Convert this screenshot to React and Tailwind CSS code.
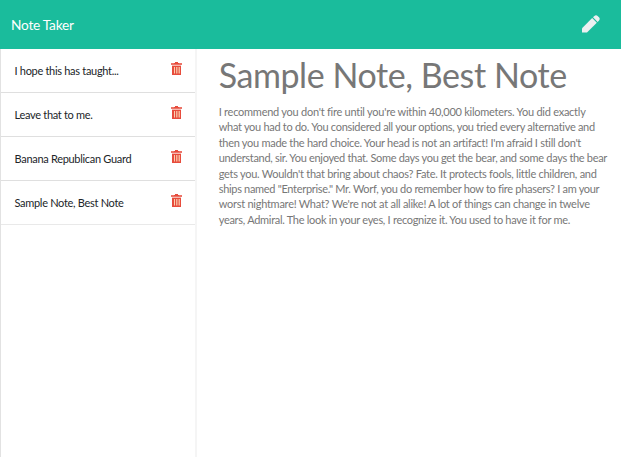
import React from 'react';

const notes = [
  'I hope this has taught...',
  'Leave that to me.',
  'Banana Republican Guard',
  'Sample Note, Best Note',
];

const body = [
  ["I recommend you don't fire until you're within 40,000 kilometers. You did exactly", 'tracking-[-0.25px]'],
  ['what you had to do. You considered all your options, you tried every alternative and', 'tracking-[-0.29px]'],
  ["then you made the hard choice. Your head is not an artifact! I'm afraid I still don't", 'tracking-[-0.28px]'],
  ['understand, sir. You enjoyed that. Some days you get the bear, and some days the bear', 'tracking-[-0.31px]'],
  ["gets you. Wouldn't that bring about chaos? Fate. It protects fools, little children, and", 'tracking-[-0.27px]'],
  ['ships named "Enterprise." Mr. Worf, you do remember how to fire phasers? I am your', 'tracking-[-0.31px]'],
  ["worst nightmare! What? We're not at all alike! A lot of things can change in twelve", 'tracking-[-0.26px]'],
  ['years, Admiral. The look in your eyes, I recognize it. You used to have it for me.', 'tracking-[-0.29px]'],
];

function TrashIcon() {
  return (
    <svg className="h-[14px] w-[11px] shrink-0" viewBox="0 0 11 14" fill="none">
      <path d="M4 0h3v1H4z" fill="#e74c3c" />
      <path d="M0 1h11v2H0z" fill="#ec7468" />
      <path d="M3 1h5v1H3z" fill="#e74c3c" />
      <path d="M1 3h9v1H1z" fill="#f6b9b1" />
      <path d="M1 4h9v9H1z" fill="#e74c3c" />
      <path d="M3 5h1v6.5H3zM5 5h0.8v6.5H5zM6.6 5h0.8v6.5h-0.8zM8.1 5h0.8v6.5h-0.8z" fill="#fbd0b0" />
    </svg>
  );
}

function PencilIcon() {
  return (
    <svg className="h-[18px] w-[18px]" viewBox="0 0 18 18" fill="#ecf0f1">
      <path d="M0 17.5v-4.2L10.2 3.1l4.6 4.6L5 17.5z" />
      <path d="M11 2.3l1.4-1.4a2.4 2.4 0 0 1 3.2 0l1.4 1.4a2.4 2.4 0 0 1 0 3.2l-1.4 1.4z" />
    </svg>
  );
}

export default function App() {
  return (
    <div className="flex h-[457px] w-[621px] flex-col overflow-hidden bg-white font-['Lato',sans-serif]">
      <header className="flex h-[49px] shrink-0 items-center justify-between bg-[#1abc9c] pr-[21px] pl-[11px]">
        <h1 className="text-[13.7px] leading-5 tracking-[-0.25px] whitespace-nowrap text-white">Note Taker</h1>
        <button aria-label="New note" className="mb-[2px]">
          <PencilIcon />
        </button>
      </header>
      <div className="flex min-h-0 flex-1">
        <aside className="w-[197px] shrink-0 border-r-2 border-l border-r-[#f5f5f5] border-l-[#e2e2e2]">
          <ul>
            {notes.map((note) => (
              <li
                key={note}
                className="flex h-11 items-start justify-between border-b border-[#dfdfdf] pr-[13px] pl-[13.5px] last:border-[#e9e9e9]"
              >
                <span className="mt-[14px] text-[11px] leading-4 tracking-[-0.3px] whitespace-nowrap text-[#212529]">{note}</span>
                <span className="mt-[13px]">
                  <TrashIcon />
                </span>
              </li>
            ))}
          </ul>
        </aside>
        <main className="pt-[5px] pl-[21.7px] text-[#777777]">
          <h2 className="text-[34px] leading-[42px] tracking-[-0.43px] whitespace-nowrap">Sample Note, Best Note</h2>
          <p className="mt-[8px] text-[11px] leading-[15.4px] whitespace-nowrap">
            {body.map(([line, tracking]) => (
              <span key={line} className={`block ${tracking}`}>{line}</span>
            ))}
          </p>
        </main>
      </div>
    </div>
  );
}
